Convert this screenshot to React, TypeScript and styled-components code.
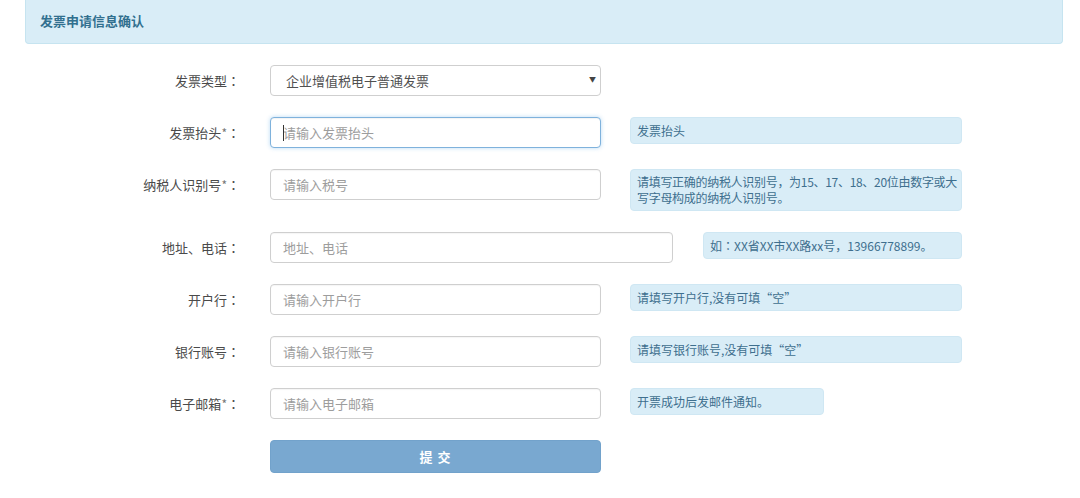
import React from "react";
import styled, { createGlobalStyle } from "styled-components";

const GlobalStyle = createGlobalStyle`
  html, body {
    margin: 0;
    padding: 0;
    background: #ffffff;
  }
  body {
    font-family: "Noto Sans CJK SC", "Liberation Sans", sans-serif;
    color: #444;
  }
  * { box-sizing: border-box; }
`;

const Page = styled.div`
  width: 1080px;
  padding: 0 17px 0 25px;
`;

const Header = styled.div`
  height: 44px;
  display: flex;
  align-items: center;
  padding: 0 0 2px 14px;
  background: #d9edf7;
  border: 1px solid #c6e4f0;
  border-top: none;
  border-radius: 0 0 4px 4px;
  color: #31708f;
  font-size: 13px;
  font-weight: 700;
`;

const Form = styled.form`
  display: flex;
  flex-direction: column;
  gap: 21px;
  margin-top: 21px;
  margin-left: -25px;
`;

const Row = styled.div`
  display: flex;
  align-items: flex-start;
`;

const Label = styled.label`
  width: 240px;
  margin-right: 30px;
  flex: none;
  text-align: right;
  line-height: 31px;
  font-size: 13px;
  color: #4a4a4a;
  white-space: nowrap;
`;

const Colon = styled.span`
  font-family: "Noto Sans CJK TC", "Noto Sans CJK SC", sans-serif;
`;

const Star = styled.span`
  color: #777;
  font-size: 12px;
`;

const FieldWrap = styled.div<{ $wide?: boolean }>`
  position: relative;
  flex: none;
  width: ${(p) => (p.$wide ? "403px" : "331px")};
`;

const Input = styled.input<{ $focused?: boolean }>`
  display: block;
  width: 100%;
  height: 31px;
  padding: 0 12px;
  border: 1px solid ${(p) => (p.$focused ? "#7fb2dc" : "#cfcfcf")};
  border-radius: 4px;
  font-family: inherit;
  font-size: 13px;
  color: #555;
  background: #fff;
  outline: none;
  box-shadow: ${(p) =>
    p.$focused
      ? "inset 0 1px 1px rgba(0,0,0,.05), 0 0 4px rgba(102,175,233,.45)"
      : "inset 0 1px 1px rgba(0,0,0,.04)"};
  &::placeholder {
    color: #9d9d9d;
  }
`;

const Caret = styled.span`
  position: absolute;
  left: 13px;
  top: 8px;
  width: 1px;
  height: 16px;
  background: #333;
`;

const Select = styled.select`
  display: block;
  width: 100%;
  height: 31px;
  padding: 0 15px;
  border: 1px solid #cfcfcf;
  border-radius: 4px;
  font-family: inherit;
  font-size: 13px;
  color: #505050;
  background: #fff;
  appearance: none;
  -webkit-appearance: none;
  outline: none;
`;

const Arrow = styled.span`
  position: absolute;
  right: 5px;
  top: 9px;
  font-size: 7px;
  color: #444;
  pointer-events: none;
`;

const Hint = styled.div<{ $w: number; $gap?: number; $tight?: boolean }>`
  flex: none;
  width: ${(p) => p.$w}px;
  margin-left: ${(p) => p.$gap ?? 29}px;
  padding: 4px 6px;
  background: #d9edf7;
  border: 1px solid #cfe7f3;
  border-radius: 4px;
  font-size: 12px;
  line-height: ${(p) => (p.$tight ? "16px" : "17px")};
  letter-spacing: ${(p) => (p.$tight ? "-0.3px" : "0")};
  color: #3e6f8e;
  white-space: nowrap;
`;

const Submit = styled.button`
  margin-left: 270px;
  width: 331px;
  height: 33px;
  border: 1px solid #72a2cb;
  border-radius: 4px;
  background: #79a8d0;
  color: #fff;
  font-family: inherit;
  font-size: 13px;
  font-weight: 700;
  letter-spacing: 1px;
  cursor: pointer;
`;

export default function App() {
  return (
    <>
      <GlobalStyle />
      <Page>
        <Header>发票申请信息确认</Header>
        <Form onSubmit={(e) => e.preventDefault()}>
          <Row>
            <Label>
              发票类型<Colon>：</Colon>
            </Label>
            <FieldWrap>
              <Select defaultValue="1">
                <option value="1">企业增值税电子普通发票</option>
              </Select>
              <Arrow>▼</Arrow>
            </FieldWrap>
          </Row>
          <Row>
            <Label>
              发票抬头<Star>*</Star>
              <Colon>：</Colon>
            </Label>
            <FieldWrap>
              <Input $focused placeholder="请输入发票抬头" />
              <Caret />
            </FieldWrap>
            <Hint $w={332}>发票抬头</Hint>
          </Row>
          <Row>
            <Label>
              纳税人识别号<Star>*</Star>
              <Colon>：</Colon>
            </Label>
            <FieldWrap>
              <Input placeholder="请输入税号" />
            </FieldWrap>
            <Hint $w={332} $tight>
              请填写正确的纳税人识别号，为15、17、18、20位由数字或大
              <br />
              写字母构成的纳税人识别号。
            </Hint>
          </Row>
          <Row>
            <Label>
              地址、电话<Colon>：</Colon>
            </Label>
            <FieldWrap $wide>
              <Input placeholder="地址、电话" />
            </FieldWrap>
            <Hint $w={259} $gap={30}>
              如<Colon>：</Colon>XX省XX市XX路xx号，13966778899。
            </Hint>
          </Row>
          <Row>
            <Label>
              开户行<Colon>：</Colon>
            </Label>
            <FieldWrap>
              <Input placeholder="请输入开户行" />
            </FieldWrap>
            <Hint $w={332}>请填写开户行,没有可填“空”</Hint>
          </Row>
          <Row>
            <Label>
              银行账号<Colon>：</Colon>
            </Label>
            <FieldWrap>
              <Input placeholder="请输入银行账号" />
            </FieldWrap>
            <Hint $w={332}>请填写银行账号,没有可填“空”</Hint>
          </Row>
          <Row>
            <Label>
              电子邮箱<Star>*</Star>
              <Colon>：</Colon>
            </Label>
            <FieldWrap>
              <Input placeholder="请输入电子邮箱" />
            </FieldWrap>
            <Hint $w={194}>开票成功后发邮件通知。</Hint>
          </Row>
          <Row>
            <Submit type="submit">提 交</Submit>
          </Row>
        </Form>
      </Page>
    </>
  );
}
